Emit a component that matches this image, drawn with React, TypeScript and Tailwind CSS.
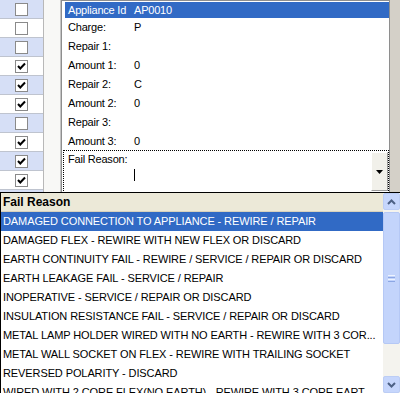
import React from "react";

const checks = [false, false, false, true, true, true, false, true, true, true, false];

const fields: { label: string; value: string }[] = [
  { label: "Charge:", value: "P" },
  { label: "Repair 1:", value: "" },
  { label: "Amount 1:", value: "0" },
  { label: "Repair 2:", value: "C" },
  { label: "Amount 2:", value: "0" },
  { label: "Repair 3:", value: "" },
  { label: "Amount 3:", value: "0" },
];

const reasons = [
  "DAMAGED CONNECTION TO APPLIANCE - REWIRE / REPAIR",
  "DAMAGED FLEX - REWIRE WITH NEW FLEX OR DISCARD",
  "EARTH CONTINUITY FAIL - REWIRE / SERVICE / REPAIR OR DISCARD",
  "EARTH LEAKAGE FAIL - SERVICE / REPAIR",
  "INOPERATIVE - SERVICE / REPAIR OR DISCARD",
  "INSULATION RESISTANCE FAIL - SERVICE / REPAIR OR DISCARD",
  "METAL LAMP HOLDER WIRED WITH NO EARTH - REWIRE WITH 3 COR...",
  "METAL WALL SOCKET ON FLEX - REWIRE WITH TRAILING SOCKET",
  "REVERSED POLARITY - DISCARD",
  "WIRED WITH 2 CORE FLEX(NO EARTH) - REWIRE WITH 3 CORE EART",
];

function CheckBox({ checked }: { checked: boolean }) {
  return (
    <div className="w-[13px] h-[13px] bg-white border border-[#8A8A8A] flex items-center justify-center">
      {checked && (
        <svg width="11" height="11" viewBox="0 0 11 11">
          <polyline points="2,5 4.3,7.5 9,2.5" fill="none" stroke="#000" strokeWidth="2" />
        </svg>
      )}
    </div>
  );
}

function ScrollButton({ up }: { up: boolean }) {
  return (
    <div className="w-[17px] h-[17px] rounded-[2px] border border-[#BCCDF5] bg-[#C6D6FC] flex items-center justify-center">
      <svg width="9" height="6" viewBox="0 0 9 6">
        <polyline
          points={up ? "1,5 4.5,1.5 8,5" : "1,1 4.5,4.5 8,1"}
          fill="none"
          stroke="#4D6185"
          strokeWidth="2"
        />
      </svg>
    </div>
  );
}

export default function App() {
  return (
    <div className="relative w-[400px] h-[393px] overflow-hidden bg-[#D4D0C8] font-['Liberation_Sans',Arial,sans-serif] text-[11px] text-black tracking-[-0.2px]">
      <div className="flex h-[393px]">
        {/* checkbox column */}
        <div className="w-[44px] border-r border-[#B8B8B8] bg-white">
          {checks.map((c, i) => (
            <div
              key={i}
              className={`h-[19px] border-b border-[#BFC4CF] flex items-center justify-center ${
                i % 2 === 0 ? "bg-[#D6DFF6]" : "bg-white"
              }`}
            >
              <CheckBox checked={c} />
            </div>
          ))}
        </div>

        <div className="w-[17px] bg-[#F8F8F6] border-r border-[#C4C4C4]" />

        {/* details panel */}
        <div className="w-[329px] bg-white border-l border-t border-r border-[#8E8E8E] flex flex-col">
          <div className="h-[16px] mt-[1px] ml-[3px] bg-[#316AC5] text-white flex items-center pl-[3px]">
            <span className="w-[66px]">Appliance Id</span>
            <span>AP0010</span>
          </div>
          {fields.map((f, i) => (
            <div
              key={f.label}
              className={`${i === fields.length - 1 ? "h-[18px]" : "h-[19px]"} ml-[3px] pl-[3px] flex items-center`}
            >
              <span className="w-[66px]">{f.label}</span>
              <span>{f.value}</span>
            </div>
          ))}
          <div className="ml-[1px] h-[43px] border border-dotted border-black flex">
            <div className="flex-1 pl-[4px] pt-[2px]">
              <div className="leading-[13px]">Fail Reason:</div>
              <div className="ml-[66px] mt-[3px] w-[1px] h-[12px] bg-black" />
            </div>
            <div className="w-[17px] h-[39px] mt-[1px] bg-[#F1F0EA] border-t border-l border-white border-r border-b border-r-[#9C9C9C] border-b-[#9C9C9C] flex items-center justify-center">
              <svg width="7" height="4" viewBox="0 0 7 4">
                <polygon points="0,0 7,0 3.5,4" fill="#000" />
              </svg>
            </div>
          </div>
        </div>
      </div>

      {/* dropdown list */}
      <div className="absolute left-0 top-[192px] w-[402px] h-[203px] bg-white border border-black flex">
        <div className="w-[382px] flex flex-col">
          <div className="h-[19px] bg-[#ECE9D8] border-b border-[#D8D2BD] flex items-center pl-[2px] font-bold text-[12px] tracking-[0px]">
            Fail Reason
          </div>
          {reasons.map((r, i) => (
            <div
              key={r}
              className={`h-[19px] shrink-0 flex items-center pl-[2px] whitespace-nowrap overflow-hidden tracking-[-0.1px] ${
                i === 0 ? "bg-[#316AC5] text-white" : ""
              }`}
            >
              {r}
            </div>
          ))}
        </div>
        <div className="w-[17px] h-[200px] bg-[#F4F3EE] flex flex-col justify-between">
          <div>
            <ScrollButton up />
            <div className="mt-[2px] h-[132px] rounded-[2px] border border-[#B5C8F5] bg-[#C3D4FB] flex flex-col items-center justify-center gap-[1px]">
              <div className="w-[7px] h-[1px] bg-[#EEF3FE]" />
              <div className="w-[7px] h-[1px] bg-[#8CA7E4]" />
              <div className="w-[7px] h-[1px] bg-[#EEF3FE]" />
              <div className="w-[7px] h-[1px] bg-[#8CA7E4]" />
            </div>
          </div>
          <ScrollButton up={false} />
        </div>
      </div>
    </div>
  );
}
